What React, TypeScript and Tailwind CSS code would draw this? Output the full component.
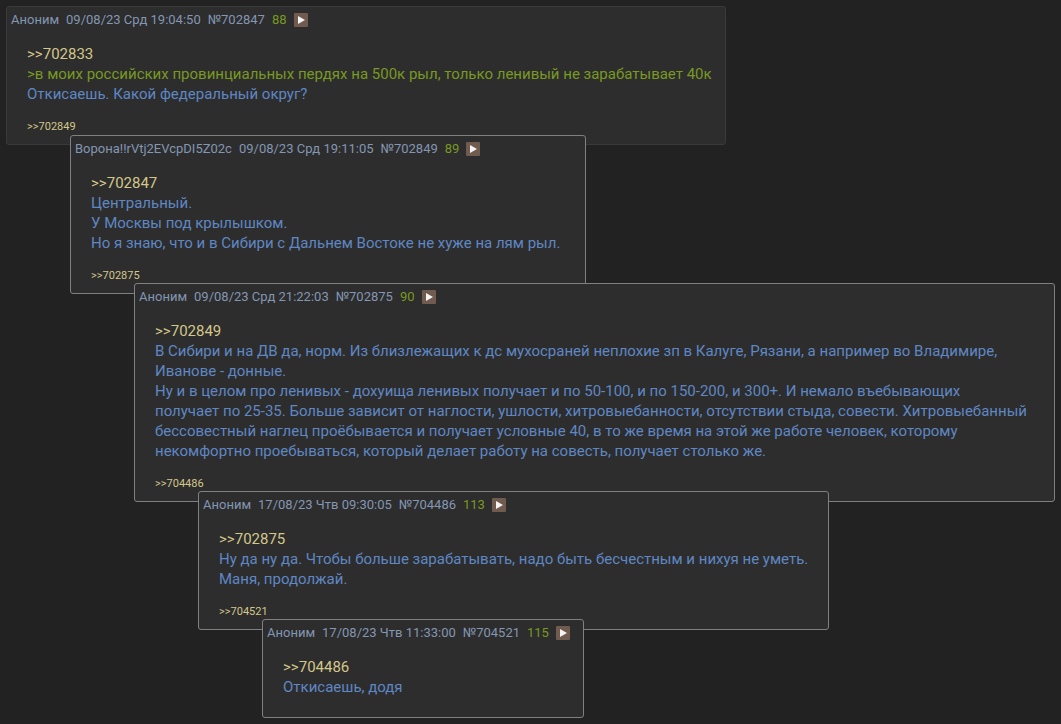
type Line = { text: string; quote?: boolean };

type Post = {
  id: number;
  name: string;
  date: string;
  index: number;
  parent: number;
  lines: Line[];
  reply?: number;
  indent: string;
  card: string;
};

const posts: Post[] = [
  {
    id: 702847,
    name: "Аноним",
    date: "09/08/23 Срд 19:04:50",
    index: 88,
    parent: 702833,
    lines: [
      {
        text: ">в моих российских провинциальных пердях на 500к рыл, только ленивый не зарабатывает 40к",
        quote: true,
      },
      { text: "Откисаешь. Какой федеральный округ?" },
    ],
    reply: 702849,
    indent: "",
    card: "w-[720px] border-[#3a3a3a]",
  },
  {
    id: 702849,
    name: "Ворона!!rVtj2EVcpDI5Z02c",
    date: "09/08/23 Срд 19:11:05",
    index: 89,
    parent: 702847,
    lines: [
      { text: "Центральный." },
      { text: "У Москвы под крылышком." },
      { text: "Но я знаю, что и в Сибири с Дальнем Востоке не хуже на лям рыл." },
    ],
    reply: 702875,
    indent: "pl-16 -mt-[10px]",
    card: "w-[516px] border-[#808080]",
  },
  {
    id: 702875,
    name: "Аноним",
    date: "09/08/23 Срд 21:22:03",
    index: 90,
    parent: 702849,
    lines: [
      {
        text: "В Сибири и на ДВ да, норм. Из близлежащих к дс мухосраней неплохие зп в Калуге, Рязани, а например во Владимире, Иванове - донные.",
      },
      {
        text: "Ну и в целом про ленивых - дохуища ленивых получает и по 50-100, и по 150-200, и 300+. И немало въебывающих получает\u00a0по 25-35. Больше зависит от наглости, ушлости, хитровыебанности, отсутствии стыда, совести. Хитровыебанный бессовестный наглец проёбывается и получает условные 40, в то же время на этой же работе человек, которому некомфортно проебываться, который делает работу на совесть, получает столько же.",
      },
    ],
    reply: 704486,
    indent: "pl-32 -mt-[11px]",
    card: "w-fit border-[#808080]",
  },
  {
    id: 704486,
    name: "Аноним",
    date: "17/08/23 Чтв 09:30:05",
    index: 113,
    parent: 702875,
    lines: [
      { text: "Ну да ну да. Чтобы больше зарабатывать, надо быть бесчестным и нихуя не уметь." },
      { text: "Маня, продолжай." },
    ],
    reply: 704521,
    indent: "pl-48 -mt-[11px]",
    card: "w-[631px] border-[#808080]",
  },
  {
    id: 704521,
    name: "Аноним",
    date: "17/08/23 Чтв 11:33:00",
    index: 115,
    parent: 704486,
    lines: [{ text: "Откисаешь, додя" }],
    indent: "pl-64 -mt-[11px]",
    card: "w-[322px] border-[#808080]",
  },
];

function PostCard({ post }: { post: Post }) {
  return (
    <div className={`relative ${post.indent}`}>
      <article
        id={`post-${post.id}`}
        className={`max-w-full rounded-[3px] border bg-[#2d2d2d] ${post.card}`}
      >
        <header className="flex items-center gap-[7px] pt-[5px] pl-1 text-[13px] leading-4 text-[#8396b2]">
          <span>{post.name}</span>
          <time>{post.date}</time>
          <a href={`#post-${post.id}`}>№{post.id}</a>
          <span className="text-[#789922]">{post.index}</span>
          <button
            type="button"
            aria-label="Ответить"
            className="flex size-[14px] items-center justify-center rounded-[1px] bg-[#705b4e]"
          >
            <svg viewBox="0 0 14 14" className="size-[14px]" aria-hidden="true">
              <path d="M4 3 L11 7 L4 11 Z" fill="#f4f4f4" />
            </svg>
          </button>
        </header>
        <div className="pt-4 pr-3 pl-5 text-[15px] leading-5 text-[#5f87c4]">
          <a href={`#post-${post.parent}`} className="block w-fit text-[#d3c78a]">
            &gt;&gt;{post.parent}
          </a>
          {post.lines.map((line) => (
            <p key={line.text} className={line.quote ? "text-[#789922]" : undefined}>
              {line.text}
            </p>
          ))}
        </div>
        {post.reply ? (
          <footer className="flex px-5 pt-4 pb-[10px] text-[11px] leading-[14px] text-[#d3c78a]">
            <a href={`#post-${post.reply}`}>&gt;&gt;{post.reply}</a>
          </footer>
        ) : (
          <div className="pb-5" />
        )}
      </article>
    </div>
  );
}

export default function App() {
  return (
    <main className="min-h-screen bg-[#222222] p-[6px] font-['Roboto',sans-serif]">
      {posts.map((post) => (
        <PostCard key={post.id} post={post} />
      ))}
    </main>
  );
}
